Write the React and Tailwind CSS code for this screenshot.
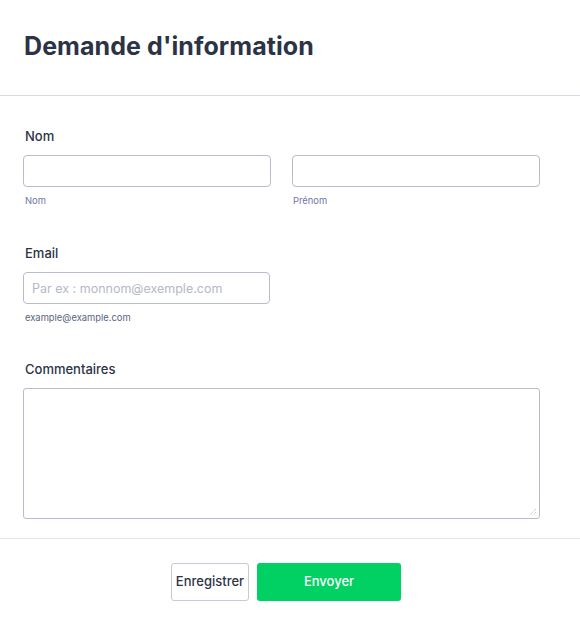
export default function App() {
  return (
    <div className="w-[580px] h-[630px] bg-white text-[#2c3345]" style={{ fontFamily: 'Inter, "Noto Sans", sans-serif' }}>
      <div className="h-[96px] px-[24px] flex items-center border-b border-[#d8d8e3]">
        <h1 className="text-[25px] font-bold leading-none tracking-[0.08px] -mt-[2px]">Demande d'information</h1>
      </div>
      <div className="px-[23px]">
        <div className="pt-[32px]">
          <label className="block text-[13px] font-medium leading-[16px] pl-[2px]">Nom</label>
          <div className="mt-[11px] flex gap-[21px]">
            <div className="w-[248px]">
              <input className="block w-full h-[32px] border border-[#b8bccd] rounded-[4px] outline-none" />
              <div className="mt-[8px] text-[9.4px] leading-[12px] text-[#6f76a7] pl-[2px]">Nom</div>
            </div>
            <div className="w-[248px]">
              <input className="block w-full h-[32px] border border-[#b8bccd] rounded-[4px] outline-none" />
              <div className="mt-[8px] text-[9.4px] leading-[12px] text-[#6f76a7] pl-[1px]">Prénom</div>
            </div>
          </div>
        </div>
        <div className="pt-[38px]">
          <label className="block text-[13px] font-medium leading-[16px] pl-[2px]">Email</label>
          <div className="mt-[11px] w-[247px]">
            <input placeholder="Par ex : monnom@exemple.com" className="block w-full h-[32px] border border-[#b8bccd] rounded-[4px] outline-none px-[8px] text-[12.5px] placeholder:text-[#b5b9c8]" />
            <div className="mt-[8px] text-[9.4px] leading-[12px] text-[#57647e] pl-[2px]">example@example.com</div>
          </div>
        </div>
        <div className="pt-[37px]">
          <label className="block text-[13px] font-medium leading-[16px] pl-[2px]">Commentaires</label>
          <div className="relative mt-[11px] w-[517px] h-[131px]">
            <textarea className="block w-full h-full border border-[#b8bccd] rounded-[3px] outline-none resize-none" />
            <svg className="absolute right-[3px] bottom-[3px]" width="8" height="8" viewBox="0 0 8 8">
              <path d="M7 1L1 7M7 4L4 7" stroke="#b3b6c4" strokeWidth="1" strokeDasharray="1 1" />
            </svg>
          </div>
        </div>
      </div>
      <div className="mt-[19px] border-t border-[#e3e3ec] flex justify-center gap-[8px] pt-[24px] pr-[8px]">
        <button className="h-[38px] w-[78px] border border-[#c3cad8] rounded-[3px] bg-white text-[13px] font-medium text-[#2c3345]">Enregistrer</button>
        <button className="h-[38px] w-[144px] rounded-[3px] bg-[#01d062] text-[13px] font-medium text-white">Envoyer</button>
      </div>
    </div>
  );
}
